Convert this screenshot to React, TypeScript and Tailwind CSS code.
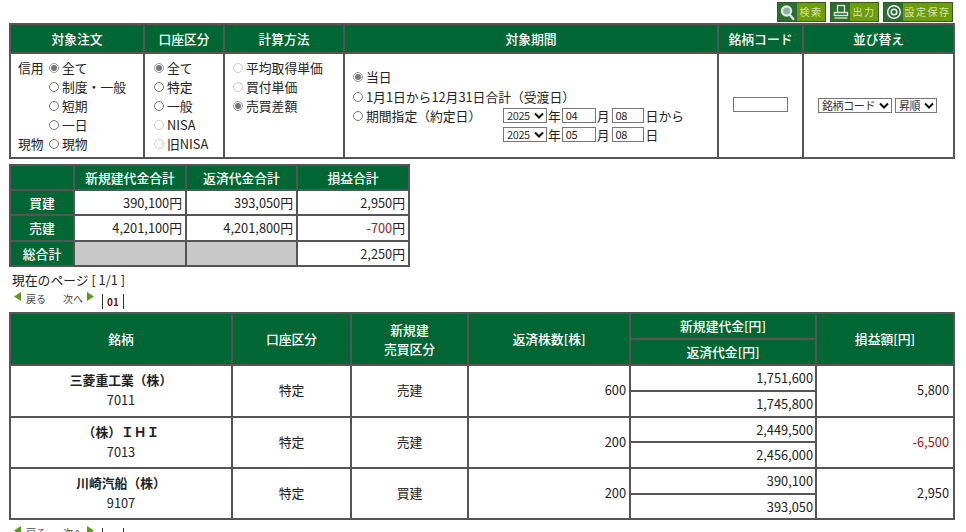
const font = { fontFamily: '"Noto Sans CJK JP", "Noto Sans", sans-serif' };

function Radio({ checked, off }: { checked?: boolean; off?: boolean }) {
  return (
    <span className={`inline-flex w-[10px] h-[10px] rounded-full border items-center justify-center shrink-0 mr-[3px] ${off ? 'border-[#ccc]' : 'border-[#777]'} ${checked ? 'border-[#999]' : ''}`}>
      {checked && <span className="w-[6px] h-[6px] rounded-full bg-[#777]" />}
    </span>
  );
}

function Opt({ label, checked, off }: { label: string; checked?: boolean; off?: boolean }) {
  return (
    <div className="flex items-center h-[19px]">
      <Radio checked={checked} off={off} />
      <span>{label}</span>
    </div>
  );
}

function Sel({ value, w }: { value: string; w: string }) {
  return (
    <span className={`inline-flex items-center justify-between h-[15px] border border-[#767676] text-[11px] tracking-[-0.4px] leading-none pl-[3px] pr-[2px] ${w}`}>
      <span className="text-[#333]">{value}</span>
      <svg width="10" height="7" viewBox="0 0 10 7" fill="none" stroke="#111" strokeWidth="2"><path d="M1 1.5l4 4 4-4" /></svg>
    </span>
  );
}

function Num({ value, w }: { value: string; w: string }) {
  return <span className={`inline-block h-[15px] border border-[#767676] text-[11px] tracking-[-0.4px] leading-[13px] pl-[3px] ${w}`}>{value}</span>;
}

function ToolBtn({ label, w, icon }: { label: string; w: string; icon: React.ReactNode }) {
  return (
    <div className={`flex h-[20px] border border-[#2e5d1f] bg-[#6d9d0a] ${w}`}>
      <div className="w-[19px] flex items-center justify-center bg-[#2f6b35]">{icon}</div>
      <div className="flex-1 text-center text-[#d4e6b0] text-[10px] leading-[18px] tracking-[1.5px]">{label}</div>
    </div>
  );
}

function Pager({ compact }: { compact?: boolean }) {
  return (
    <div className={`flex items-start ml-[14px] text-[10px] text-[#444] ${compact ? 'h-[12px]' : 'h-[15px]'}`}>
      <svg width="8" height="10" viewBox="0 0 8 10" className="mt-[1px]"><path d="M7 0v9L0 4.5z" fill="#5c9a1e" /></svg>
      <span className="ml-[4px] mt-[1px] leading-[14px]">戻る</span>
      <span className="ml-[17px] mt-[1px] leading-[14px]">次へ</span>
      <svg width="9" height="10" viewBox="0 0 9 10" className="ml-[3px] mt-[1px]"><path d="M1 0v9l7-4.5z" fill="#5c9a1e" /></svg>
      <span className="ml-[7px] mt-[3px] leading-[15px] border-l border-r border-[#333] px-[4px] font-bold text-[#6b0f0f]">01</span>
    </div>
  );
}

const th = 'border-2 border-[#555] bg-[#006633] text-white font-medium text-center p-0';
const td = 'border-2 border-[#555] bg-white p-0';

const summary = [
  { label: '買建', a: '390,100円', b: '393,050円', c: '2,950', red: false, h: 'h-[25px]' },
  { label: '売建', a: '4,201,100円', b: '4,201,800円', c: '-700', red: true, h: 'h-[26px]' },
];

const rows = [
  { name: '三菱重工業（株）', code: '7011', side: '売建', qty: '600', open: '1,751,600', close: '1,745,800', pl: '5,800', red: false, h1: 'h-[26px]', h2: 'h-[26px]' },
  { name: '（株）ＩＨＩ', code: '7013', side: '売建', qty: '200', open: '2,449,500', close: '2,456,000', pl: '-6,500', red: true, h1: 'h-[25px]', h2: 'h-[26px]' },
  { name: '川崎汽船（株）', code: '9107', side: '買建', qty: '200', open: '390,100', close: '393,050', pl: '2,950', red: false, h1: 'h-[26px]', h2: 'h-[25px]' },
];

export default function App() {
  return (
    <div className="w-[966px] h-[532px] overflow-hidden bg-white text-[12.8px] text-[#222]" style={font}>
      <div className="flex justify-end gap-[4px] pt-[2px] pr-[13px] h-[23px]">
        <ToolBtn label="検索" w="w-[49px]" icon={
          <svg width="17" height="17" viewBox="0 0 17 17" fill="none" stroke="#dfe8e4" strokeWidth="2.2"><circle cx="7.5" cy="7" r="4.6" fill="#8fb0a0" /><path d="M11 11l3.5 4.2" strokeLinecap="round" /></svg>
        } />
        <ToolBtn label="出力" w="w-[49px]" icon={
          <svg width="16" height="16" viewBox="0 0 16 16" fill="none" stroke="#dfe8d4" strokeWidth="1.3"><rect x="4.5" y="1.5" width="7" height="7" /><rect x="1.5" y="8.5" width="13" height="3" /><path d="M1.5 14h13" /></svg>
        } />
        <ToolBtn label="設定保存" w="w-[70px]" icon={
          <svg width="16" height="16" viewBox="0 0 16 16" fill="none" stroke="#f0f4ee" strokeWidth="1.5"><circle cx="8" cy="8" r="6.3" /><circle cx="8" cy="8" r="2.8" /></svg>
        } />
      </div>

      <table className="ml-[9px] w-[944px] table-fixed border-collapse">
        <colgroup>
          <col className="w-[134px]" />
          <col className="w-[80px]" />
          <col className="w-[120px]" />
          <col className="w-[374px]" />
          <col className="w-[85px]" />
          <col className="w-[151px]" />
        </colgroup>
        <thead>
          <tr className="h-[29px]">
            <th className={th}>対象注文</th>
            <th className={th}>口座区分</th>
            <th className={th}>計算方法</th>
            <th className={th}>対象期間</th>
            <th className={th}>銘柄コード</th>
            <th className={th}>並び替え</th>
          </tr>
        </thead>
        <tbody>
          <tr className="h-[105px]">
            <td className={`${td} align-top`}>
              <div className="flex pl-[7px] pt-[4px]">
                <div className="w-[31px] leading-[19px]">
                  <div>信用</div>
                  <div className="mt-[57px]">現物</div>
                </div>
                <div>
                  <Opt label="全て" checked />
                  <Opt label="制度・一般" />
                  <Opt label="短期" />
                  <Opt label="一日" />
                  <Opt label="現物" />
                </div>
              </div>
            </td>
            <td className={`${td} align-top`}>
              <div className="pl-[9px] pt-[4px]">
                <Opt label="全て" checked />
                <Opt label="特定" />
                <Opt label="一般" />
                <Opt label="NISA" off />
                <Opt label="旧NISA" off />
              </div>
            </td>
            <td className={`${td} align-top`}>
              <div className="pl-[8px] pt-[4px]">
                <Opt label="平均取得単価" off />
                <Opt label="買付単価" off />
                <Opt label="売買差額" checked />
              </div>
            </td>
            <td className={`${td} align-top`}>
              <div className="pl-[8px] pt-[13px]">
                <Opt label="当日" checked />
                <div className="mt-[1px]"><Opt label="1月1日から12月31日合計（受渡日）" /></div>
                <div className="flex">
                  <div className="w-[150px]"><Opt label="期間指定（約定日）" /></div>
                  <div>
                    <div className="flex items-center h-[19px]">
                      <Sel value="2025" w="w-[44px]" /><span className="mx-[1px]">年</span><Num value="04" w="w-[34px]" /><span className="ml-[1px] mr-[2px]">月</span><Num value="08" w="w-[32px]" /><span className="ml-[2px]">日から</span>
                    </div>
                    <div className="flex items-center h-[19px]">
                      <Sel value="2025" w="w-[44px]" /><span className="mx-[1px]">年</span><Num value="05" w="w-[34px]" /><span className="ml-[1px] mr-[2px]">月</span><Num value="08" w="w-[32px]" /><span className="ml-[2px]">日</span>
                    </div>
                  </div>
                </div>
              </div>
            </td>
            <td className={`${td} text-center`}>
              <span className="inline-block w-[55px] h-[15px] border border-[#767676] align-middle mb-[4px]" />
            </td>
            <td className={td}>
              <div className="flex justify-center gap-[3px] pr-[2px]">
                <Sel value="銘柄コード" w="w-[74px]" />
                <Sel value="昇順" w="w-[42px]" />
              </div>
            </td>
          </tr>
        </tbody>
      </table>

      <table className="ml-[9px] mt-[5px] w-[399px] table-fixed border-collapse">
        <colgroup>
          <col className="w-[64px]" />
          <col className="w-[112px]" />
          <col className="w-[111px]" />
          <col className="w-[112px]" />
        </colgroup>
        <thead>
          <tr className="h-[25px]">
            <th className={th} />
            <th className={th}>新規建代金合計</th>
            <th className={th}>返済代金合計</th>
            <th className={th}>損益合計</th>
          </tr>
        </thead>
        <tbody>
          {summary.map((r) => (
            <tr key={r.label} className={r.h}>
              <th className={th}>{r.label}</th>
              <td className={`${td} text-right pr-[3px]`}>{r.a}</td>
              <td className={`${td} text-right pr-[3px]`}>{r.b}</td>
              <td className={`${td} text-right pr-[3px]`}>
                <span className={r.red ? 'text-[#aa1515]' : ''}>{r.c}</span>円
              </td>
            </tr>
          ))}
          <tr className="h-[25px]">
            <th className={th}>総合計</th>
            <td className={`${td} !bg-[#c8c8c8]`} />
            <td className={`${td} !bg-[#c8c8c8]`} />
            <td className={`${td} text-right pr-[3px]`}>2,250円</td>
          </tr>
        </tbody>
      </table>

      <div className="ml-[12px] mt-[3px] h-[19px] leading-[19px]">現在のページ [ 1/1 ]</div>
      <div className="mt-[2px]"><Pager /></div>

      <table className="ml-[9px] mt-[6px] w-[944px] table-fixed border-collapse">
        <colgroup>
          <col className="w-[222px]" />
          <col className="w-[119px]" />
          <col className="w-[117px]" />
          <col className="w-[162px]" />
          <col className="w-[186px]" />
          <col className="w-[138px]" />
        </colgroup>
        <thead>
          <tr className="h-[26px]">
            <th rowSpan={2} className={th}>銘柄</th>
            <th rowSpan={2} className={th}>口座区分</th>
            <th rowSpan={2} className={th}>新規建<br />売買区分</th>
            <th rowSpan={2} className={th}>返済株数[株]</th>
            <th className={th}>新規建代金[円]</th>
            <th rowSpan={2} className={th}>損益額[円]</th>
          </tr>
          <tr className="h-[26px]">
            <th className={th}>返済代金[円]</th>
          </tr>
        </thead>
        <tbody>
          {rows.flatMap((r) => [
            <tr key={r.code + 'a'} className={r.h1}>
              <td rowSpan={2} className={`${td} text-center leading-[20px] pb-[2px]`}>
                <div className="font-bold">{r.name}</div>
                <div>{r.code}</div>
              </td>
              <td rowSpan={2} className={`${td} text-center pb-[2px]`}>特定</td>
              <td rowSpan={2} className={`${td} text-center pb-[2px]`}>{r.side}</td>
              <td rowSpan={2} className={`${td} text-right pr-[3px] pb-[2px]`}>{r.qty}</td>
              <td className={`${td} text-right pr-[2px]`}>{r.open}</td>
              <td rowSpan={2} className={`${td} text-right pr-[4px] pb-[2px] ${r.red ? 'text-[#aa1515]' : ''}`}>{r.pl}</td>
            </tr>,
            <tr key={r.code + 'b'} className={r.h2}>
              <td className={`${td} text-right pr-[2px]`}>{r.close}</td>
            </tr>,
          ])}
        </tbody>
      </table>
      <div className="mt-[5px]"><Pager compact /></div>
    </div>
  );
}
